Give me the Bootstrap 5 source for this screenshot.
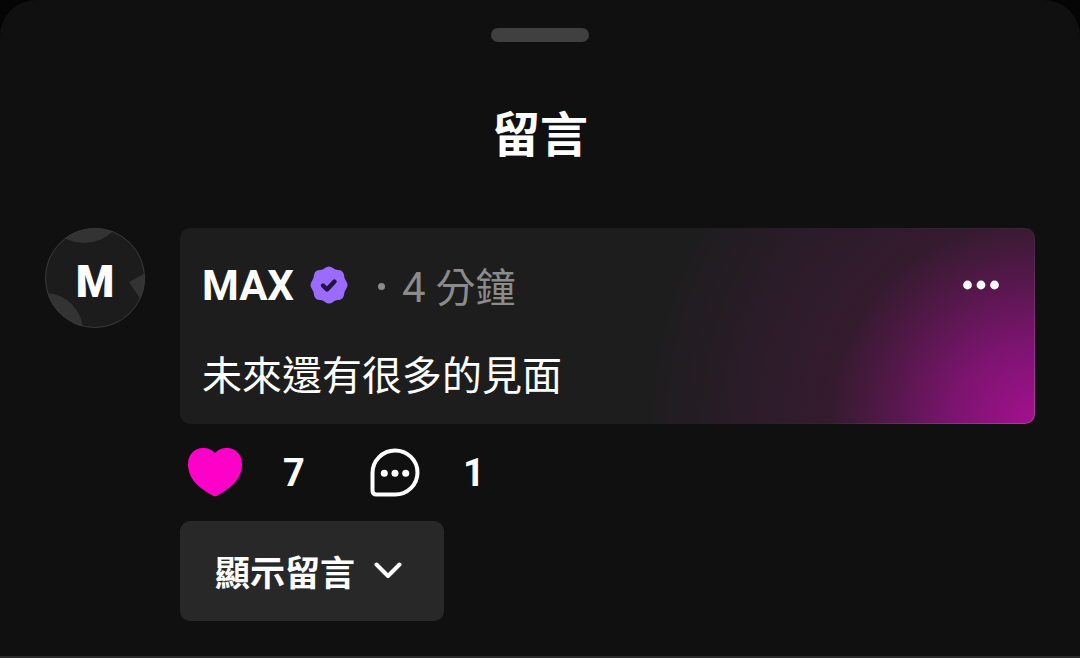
<!DOCTYPE html>
<html lang="zh-Hant">
<head>
<meta charset="utf-8">
<meta name="viewport" content="width=device-width, initial-scale=1">
<title>留言</title>
<link href="https://cdn.jsdelivr.net/npm/bootstrap@5.3.0/dist/css/bootstrap.min.css" rel="stylesheet">
<style>
  body { background: #050505; color: #fff; font-family: Roboto, "Noto Sans CJK TC", sans-serif; }
  .sheet { background: #101010; border-radius: 36px 36px 0 0; padding-top: 28px; }
  .grabber { width: 98px; height: 14px; background: #404040; }
  .sheet-title { font-size: 48px; line-height: 56px; font-weight: 700; margin: 66px 0 64px; }
  .thread { padding: 0 45px 35px; gap: 35px; border-bottom: 2px solid #2a2a2a; }
  .avatar { width: 100px; height: 100px; }
  .avatar text { font: 900 44px Roboto, sans-serif; fill: #fff; }
  .bubble {
    border-radius: 10px; padding: 21px 21px 18px; border: 1px solid transparent; color: #fff;
    background:
      radial-gradient(circle at 100% 100%, #a3108f 0, #7c1470 80px, #521848 150px, #341b2e 205px, #2b1c29 290px, #1d1d1d 390px) padding-box,
      radial-gradient(circle at 100% 100%, #b53aa5 0, #8f3284 80px, #622c58 150px, #391f33 205px, #2b1c29 290px, #1d1d1d 390px) border-box;
  }
  .meta { height: 70px; }
  .author { font-size: 42px; line-height: 56px; font-weight: 700; padding-top: 2px; }
  .verified { margin-left: 16px; }
  .dot { width: 7px; height: 7px; background: #8b8b8b; margin: 2px 17px 0 30px; }
  .when { font-size: 40px; line-height: 56px; color: #8b8b8b; padding-top: 6px; }
  .when span { font-size: 42px; }
  .message { font-size: 40px; line-height: 56px; margin-top: 29px; }
  .icon-btn { border: 0; background: none; color: inherit; padding: 0; }
  .more { width: 64px; height: 56px; }
  .actions { height: 97px; padding-left: 8px; font-size: 38px; line-height: 48px; font-weight: 700; }
  .action { gap: 40px; }
  .action + .action { gap: 42px; margin-left: 64px; }
  .action span { min-width: 24px; }
  .show-btn, .show-btn:hover, .show-btn:active { background: #282828; color: #fff; }
  .show-btn { border: 0; border-radius: 10px; height: 100px; padding: 0 42px 0 35px; font-size: 35px; line-height: 48px; font-weight: 700; gap: 19px; }
  .show-btn span { padding-top: 8px; }
</style>
</head>
<body>
<main class="sheet">
  <div class="grabber rounded-pill mx-auto"></div>
  <h1 class="sheet-title text-center">留言</h1>
  <article class="thread d-flex align-items-start">
    <svg class="avatar flex-shrink-0" viewBox="0 0 100 100" role="img" aria-label="MAX">
      <defs><clipPath id="disc"><circle cx="50" cy="50" r="50"/></clipPath></defs>
      <g clip-path="url(#disc)">
        <rect width="100" height="100" fill="#1c1c1c"/>
        <circle cx="39" cy="-27" r="42" fill="#333"/>
        <circle cx="0" cy="103" r="38" fill="#333"/>
        <path d="M84 54L104 43V84Z" fill="#333"/>
      </g>
      <circle cx="50" cy="50" r="49.5" fill="none" stroke="#383838"/>
      <text x="50" y="69" text-anchor="middle">M</text>
    </svg>
    <div class="flex-grow-1">
      <div class="bubble">
        <div class="meta d-flex align-items-center">
          <span class="author">MAX</span>
          <svg class="verified flex-shrink-0" width="38" height="38" viewBox="0 0 38 38" role="img" aria-label="已驗證">
            <path d="M15 2Q19-1 23 2Q25 4 28 4Q33 4 34 9Q34 12 36 15Q39 19 36 23Q34 26 34 29Q33 34 28 34Q25 34 23 36Q19 39 15 36Q13 34 10 34Q5 34 4 29Q4 26 2 23Q-1 19 2 15Q4 12 4 9Q5 4 10 4Q13 4 15 2Z" fill="#9b6bff"/>
            <path d="M13 19.500L17 23.500L24.500 15.500" fill="none" stroke="#21143f" stroke-width="4.400" stroke-linecap="round" stroke-linejoin="round"/>
          </svg>
          <i class="dot rounded-circle flex-shrink-0"></i>
          <time class="when text-nowrap"><span>4</span> 分鐘</time>
          <button class="icon-btn more ms-auto" type="button" aria-label="更多">
            <svg width="36" height="10" viewBox="0 0 36 10" fill="#fff" class="d-block mx-auto"><circle cx="4.500" cy="5" r="4.400"/><circle cx="18" cy="5" r="4.400"/><circle cx="31.500" cy="5" r="4.400"/></svg>
          </button>
        </div>
        <p class="message mb-0">未來還有很多的見面</p>
      </div>
      <div class="actions d-flex align-items-center">
        <button class="icon-btn action d-flex align-items-center fw-bold" type="button" aria-label="喜歡 7">
          <svg width="54" height="50" viewBox="0 0 54 50"><path d="M27 5C23 1 19.500 0 15 0C6 0 0 7 0 16C0 31 11 40 25 47.700Q27 48.800 29 47.700C43 40 54 31 54 16C54 7 48 0 39 0C34.500 0 31 1 27 5Z" fill="#ff00c8"/></svg>
          <span>7</span>
        </button>
        <button class="icon-btn action d-flex align-items-center fw-bold" type="button" aria-label="回覆 1">
          <svg width="50" height="50" viewBox="0 0 50 50"><path d="M2.500 25A22.500 22.500 0 0 1 25 2.500A22.500 22 0 0 1 25 46.500H6.500Q2.500 46.500 2.500 42.500Z" fill="none" stroke="#fff" stroke-width="4"/><g fill="#fff"><circle cx="14.300" cy="25.200" r="3.500"/><circle cx="25" cy="25.200" r="3.500"/><circle cx="35.700" cy="25.200" r="3.500"/></g></svg>
          <span>1</span>
        </button>
      </div>
      <button class="btn show-btn d-inline-flex align-items-center text-nowrap" type="button"><span>顯示留言</span>
        <svg width="28" height="18" viewBox="0 0 28 18"><path d="M2.500 2.500L14 14L25.500 2.500" fill="none" stroke="#fff" stroke-width="4" stroke-linecap="round" stroke-linejoin="round"/></svg>
      </button>
    </div>
  </article>
</main>
<script src="https://cdn.jsdelivr.net/npm/bootstrap@5.3.0/dist/js/bootstrap.bundle.min.js"></script>
</body>
</html>
